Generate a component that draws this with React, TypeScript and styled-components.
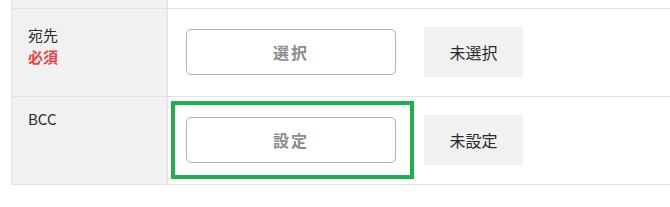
import styled, { createGlobalStyle } from "styled-components";

const GlobalStyle = createGlobalStyle`
  html, body {
    margin: 0;
    padding: 0;
    background: #fff;
  }
  body {
    font-family: "Noto Sans CJK JP", "Noto Sans", sans-serif;
    color: #333;
  }
`;

const Page = styled.div`
  padding-left: 11px;
`;

const Table = styled.div`
  border-left: 1px solid #e2e2e2;
  border-bottom: 1px solid #e2e2e2;
`;

const Row = styled.div<{ $cut?: boolean }>`
  display: grid;
  grid-template-columns: 156px 1fr;
  height: ${(p) => (p.$cut ? "8px" : "auto")};
`;

const Divider = styled.div`
  height: 1px;
  background: #e2e2e2;
`;

const Label = styled.div<{ $top?: number }>`
  background: #f1f1f1;
  border-right: 1px solid #e2e2e2;
  padding: ${(p) => p.$top ?? 0}px 16px 0;
  font-size: 15px;
  line-height: 22px;
  color: #2b2b2b;
`;

const Required = styled.div`
  color: #f23d3d;
  font-weight: 700;
`;

const Value = styled.div`
  display: flex;
  align-items: center;
  gap: 28px;
  padding: 18px 18px 19px;
  align-self: start;
`;

const ButtonWrap = styled.div`
  position: relative;
`;

const Highlight = styled.div`
  position: absolute;
  top: -16px;
  left: -15px;
  right: -18px;
  bottom: -16px;
  border: 4px solid #1fb04b;
  pointer-events: none;
`;

const SelectButton = styled.button`
  display: block;
  width: 210px;
  height: 46px;
  background: #fff;
  border: 1px solid #b3b3b3;
  border-radius: 5px;
  font-family: "Noto Sans CJK JP", sans-serif;
  font-size: 16px;
  font-weight: 700;
  letter-spacing: 2px;
  color: #8c8c8c;
`;

const Status = styled.div`
  width: 99px;
  height: 50px;
  background: #f1f1f1;
  display: flex;
  align-items: center;
  justify-content: center;
  font-size: 16px;
  color: #2b2b2b;
`;

function App() {
  return (
    <Page>
      <GlobalStyle />
      <Table>
        <Row $cut>
          <Label />
          <div />
        </Row>
        <Divider />
        <Row>
          <Label $top={15}>
            宛先
            <Required>必須</Required>
          </Label>
          <Value>
            <ButtonWrap>
              <SelectButton>選択</SelectButton>
            </ButtonWrap>
            <Status>未選択</Status>
          </Value>
        </Row>
        <Divider />
        <Row>
          <Label $top={11}>BCC</Label>
          <Value>
            <ButtonWrap>
              <SelectButton>設定</SelectButton>
              <Highlight />
            </ButtonWrap>
            <Status>未設定</Status>
          </Value>
        </Row>
      </Table>
    </Page>
  );
}

export default App;
